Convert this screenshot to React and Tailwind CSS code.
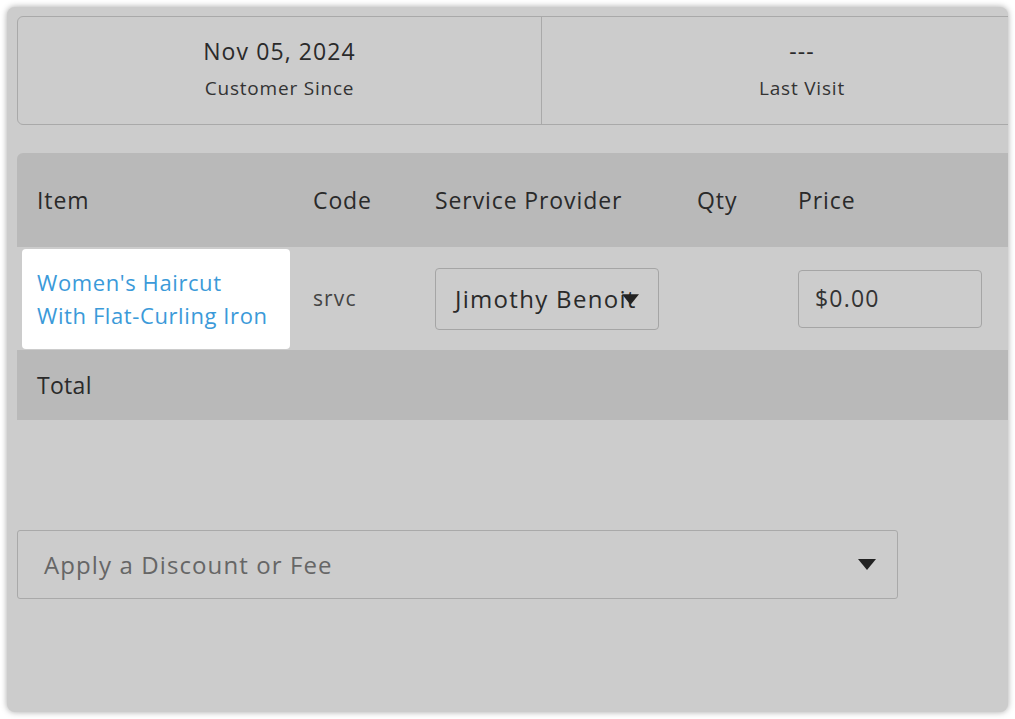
import React from 'react';

const font = { fontFamily: '"Open Sans", "Liberation Sans", sans-serif' };

const Caret = ({ className }) => (
    <svg viewBox="0 0 18 12" className={className}>
        <path d="M0 0 L18 0 L9 11 Z" fill="#222" />
    </svg>
);

const App = () => {
    return (
        <div className="w-[1015px] h-[719px] bg-white p-[7px] overflow-hidden" style={font}>
            <div className="h-[705px] w-[1001px] rounded-lg bg-[#cccccc] shadow-[0_0_6px_rgba(0,0,0,0.35)] overflow-hidden pl-[10px] pt-[9px]">
                {/* summary card */}
                <div className="flex w-[1046px] h-[109px] border border-[#a9a9a9] rounded-md">
                    <div className="w-[524px] border-r border-[#a9a9a9] flex flex-col items-center justify-center pb-[4px]">
                        <div className="text-[23px] leading-[30px] tracking-[1.1px] text-[#2a2a2a]">Nov 05, 2024</div>
                        <div className="text-[19px] leading-[28px] mt-[8px] tracking-[0.8px] text-[#333]">Customer Since</div>
                    </div>
                    <div className="flex-1 flex flex-col items-center justify-center pb-[4px]">
                        <div className="text-[23px] leading-[30px] tracking-[1.1px] text-[#2a2a2a]">---</div>
                        <div className="text-[19px] leading-[28px] mt-[8px] tracking-[0.8px] text-[#333]">Last Visit</div>
                    </div>
                </div>

                {/* line items */}
                <div className="mt-[28px] w-[1100px]">
                    <div className="flex h-[94px] items-center bg-[#b9b9b9] rounded-tl-md text-[23px] tracking-[0.9px] text-[#2a2a2a]">
                        <div className="w-[276px] pl-5">Item</div>
                        <div className="w-[122px] pl-5">Code</div>
                        <div className="w-[262px] pl-5">Service Provider</div>
                        <div className="w-[101px] pl-5">Qty</div>
                        <div className="flex-1 pl-5">Price</div>
                    </div>
                    <div className="flex h-[103px] items-center">
                        <div className="w-[276px] h-full pl-[5px] pr-[3px] pt-[2px] pb-[1px]">
                            <div className="h-full bg-white rounded-[4px] pl-[15px] flex flex-col justify-center text-[22px] leading-[33px] tracking-[0.6px] text-[#3b9ad9]">
                                <div>Women's Haircut</div>
                                <div>With Flat-Curling Iron</div>
                            </div>
                        </div>
                        <div className="w-[122px] pl-5 text-[21px] tracking-[1.1px] text-[#444]">srvc</div>
                        <div className="w-[262px] pl-5">
                            <div className="relative w-[224px] h-[62px] border border-[#a5a5a5] rounded-[4px] flex items-center pl-[19px] text-[24px] tracking-[1.3px] text-[#2a2a2a] overflow-hidden whitespace-nowrap">
                                Jimothy Benoit
                                <Caret className="absolute left-[186px] top-[25px] w-[17px] h-[12px]" />
                            </div>
                        </div>
                        <div className="w-[101px] pl-5"></div>
                        <div className="flex-1 pl-5">
                            <div className="w-[184px] h-[58px] border border-[#a5a5a5] rounded-[4px] flex items-center pl-[16px] text-[23px] tracking-[1.2px] text-[#333]">
                                $0.00
                            </div>
                        </div>
                    </div>
                    <div className="flex h-[70px] items-center bg-[#b9b9b9] text-[23px] tracking-[0.3px] text-[#2a2a2a]">
                        <div className="pl-5">Total</div>
                    </div>
                </div>

                {/* discount */}
                <div className="mt-[110px] w-[881px] h-[69px] border border-[#a9a9a9] rounded-[3px] flex items-center justify-between pl-[26px] pr-[21px]">
                    <span className="text-[24px] tracking-[1.1px] text-[#666]">Apply a Discount or Fee</span>
                    <Caret className="w-[18px] h-[12px]" />
                </div>
            </div>
        </div>
    );
};

export default App;
